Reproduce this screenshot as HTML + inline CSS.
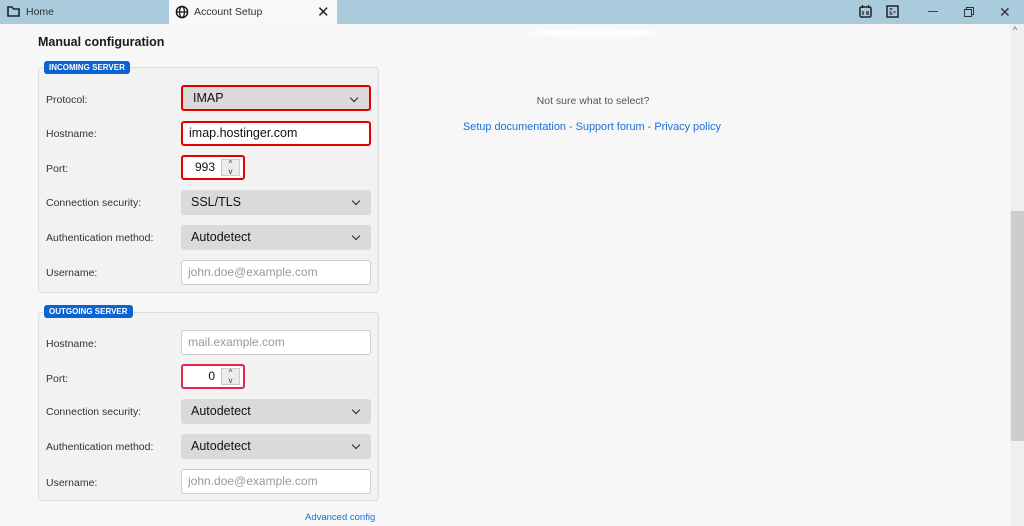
<!DOCTYPE html>
<html><head><meta charset="utf-8"><style>
*{box-sizing:border-box;margin:0;padding:0}
body{width:1024px;height:526px;overflow:hidden;background:#f7f7f7;font-family:"Liberation Sans",sans-serif;color:#222;position:relative}
.a{position:absolute}
.bar{left:0;top:0;width:1024px;height:24px;background:#a9cbdb}
.tab{left:169px;top:0;width:168px;height:24px;background:#f8f8f8}
.lbl{font-size:10.5px;color:#333;left:46px;margin-top:1px}
.fs{left:38px;width:341px;border:1px solid #dedede;border-radius:4px;background:#f2f2f2}
.lg{background:#0a63d1;color:#fff;font-size:8px;font-weight:bold;border-radius:3px;left:44px;height:13px;line-height:13px;padding:0 5px}
.inp{left:181px;width:190px;height:25px;background:#fff;border:1px solid #cfcfcf;border-radius:3px;font-size:12px;line-height:23px;padding-left:6px;color:#999}
.sel{left:181px;width:190px;height:25px;background:#dadada;border-radius:3px;font-size:12.5px;line-height:25px;padding-left:10px;color:#111}
.sel::after{content:"";position:absolute;right:12px;top:8px;width:5px;height:5px;border-right:1.5px solid #222;border-bottom:1.5px solid #222;transform:rotate(45deg)}
.red{border:2px solid #e00000}
.port{left:181px;width:64px;height:25px;background:#fff;border-radius:3px;font-size:12px;line-height:21px;text-align:right;padding-right:28px;color:#111}
.spin{position:absolute;right:3px;top:2px;width:19px;height:17px;background:#ececec;border:1px solid #ccc;font-size:8px;line-height:8px;text-align:center;color:#333}
.lnk{color:#1a6fd8}
</style></head><body>
<div class="a bar"></div>
<div class="a tab"></div>
<svg class="a" style="left:7px;top:6px" width="13" height="11"><path d="M1 1h4l1.5 2H12v7H1z" fill="none" stroke="#222" stroke-width="1.6"/></svg>
<div class="a" style="left:26px;top:6px;font-size:10.5px;color:#333">Home</div>
<svg class="a" style="left:175px;top:5px" width="14" height="14"><circle cx="7" cy="7" r="5.6" fill="none" stroke="#111" stroke-width="1.4"/><ellipse cx="7" cy="7" rx="2.4" ry="5.6" fill="none" stroke="#111" stroke-width="1.2"/><path d="M1.5 7h11" stroke="#111" stroke-width="1.2"/></svg>
<div class="a" style="left:194px;top:6px;font-size:10.5px;color:#333">Account Setup</div>
<div class="a" style="left:317px;top:3px;font-size:15px;color:#222">✕</div>
<svg class="a" style="left:859px;top:5px" width="13" height="13"><rect x="1" y="2" width="11" height="10" rx="1.5" fill="none" stroke="#222" stroke-width="1.5"/><path d="M3.5 0v3M9.5 0v3M3 7h2M7 7h3M3 9h2M7 9h3" stroke="#222" stroke-width="1.2"/></svg>
<svg class="a" style="left:886px;top:5px" width="13" height="13"><rect x="1" y="1" width="11" height="11" fill="none" stroke="#222" stroke-width="1.5"/><path d="M3.5 4h3M3.5 7h2M7.5 7h2M3.5 9h3" stroke="#222" stroke-width="1.2"/></svg>
<div class="a" style="left:928px;top:11px;width:10px;height:1px;background:#444"></div>
<svg class="a" style="left:964px;top:7px" width="10" height="10"><rect x="0.5" y="2.5" width="7" height="7" fill="none" stroke="#333"/><path d="M2.5 2.5V0.5h7v7h-2" fill="none" stroke="#333"/></svg>
<div class="a" style="left:999px;top:4px;font-size:14px;color:#333">✕</div>
<div class="a" style="left:1010px;top:24px;width:14px;height:502px;background:#efefef"></div>
<div class="a" style="left:1011px;top:211px;width:13px;height:230px;background:#cdcdcd"></div>
<div class="a" style="left:1013px;top:25px;font-size:9px;color:#555">^</div>
<div class="a" style="left:530px;top:29px;width:130px;height:8px;border-radius:50%;background:#fdfdfd"></div>

<div class="a" style="left:38px;top:35px;font-size:12.5px;font-weight:bold;color:#1a1a1a">Manual configuration</div>

<div class="a fs" style="top:67px;height:226px"></div>
<div class="a lg" style="top:61px">INCOMING SERVER</div>
<div class="a lbl" style="top:93px">Protocol:</div>
<div class="a sel red" style="top:85px;height:26px;line-height:22px">IMAP</div>
<div class="a lbl" style="top:127px">Hostname:</div>
<div class="a inp red" style="top:121px;color:#111;font-size:12.5px;line-height:21px">imap.hostinger.com</div>
<div class="a lbl" style="top:162px">Port:</div>
<div class="a port red" style="top:155px">993<div class="spin">^<br>v</div></div>
<div class="a lbl" style="top:196px">Connection security:</div>
<div class="a sel" style="top:190px">SSL/TLS</div>
<div class="a lbl" style="top:231px">Authentication method:</div>
<div class="a sel" style="top:225px">Autodetect</div>
<div class="a lbl" style="top:266px">Username:</div>
<div class="a inp" style="top:260px">john.doe@example.com</div>

<div class="a fs" style="top:312px;height:189px"></div>
<div class="a lg" style="top:305px">OUTGOING SERVER</div>
<div class="a lbl" style="top:337px">Hostname:</div>
<div class="a inp" style="top:330px">mail.example.com</div>
<div class="a lbl" style="top:372px">Port:</div>
<div class="a port" style="top:364px;border:2px solid #e8244e">0<div class="spin">^<br>v</div></div>
<div class="a lbl" style="top:405px">Connection security:</div>
<div class="a sel" style="top:399px">Autodetect</div>
<div class="a lbl" style="top:440px">Authentication method:</div>
<div class="a sel" style="top:434px">Autodetect</div>
<div class="a lbl" style="top:476px">Username:</div>
<div class="a inp" style="top:469px">john.doe@example.com</div>
<div class="a lnk" style="left:305px;top:512px;font-size:9.5px">Advanced config</div>

<div class="a" style="left:463px;top:95px;width:260px;text-align:center;font-size:10.5px;color:#555">Not sure what to select?</div>
<div class="a" style="left:463px;top:121px;font-size:10.9px;color:#666;white-space:nowrap"><span class="lnk">Setup documentation</span> - <span class="lnk">Support forum</span> - <span class="lnk">Privacy policy</span></div>
</body></html>
